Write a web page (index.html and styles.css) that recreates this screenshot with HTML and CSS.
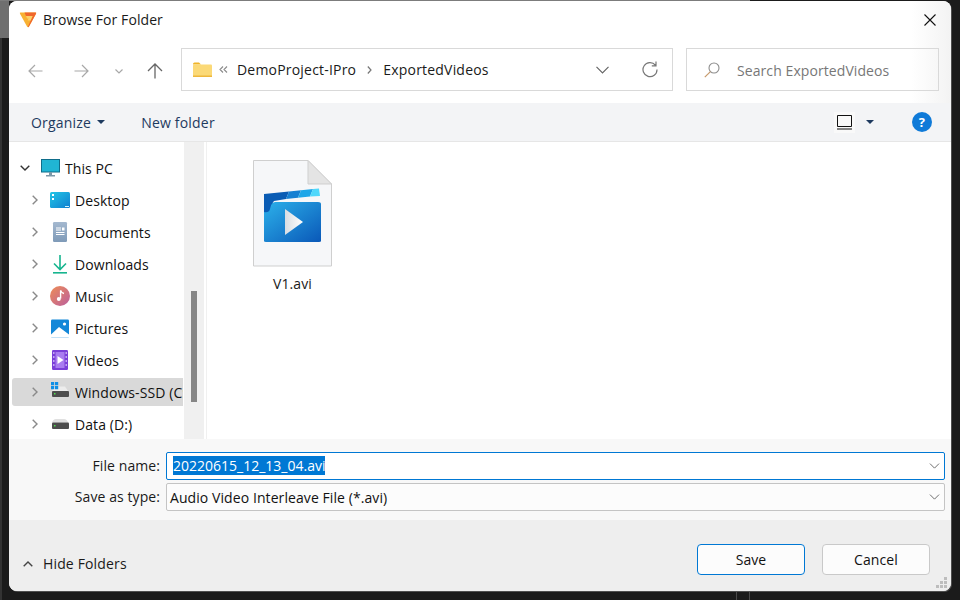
FILE: index.html
```html
<!DOCTYPE html>
<html lang="en">
<head>
    <meta charset="UTF-8">
    <title>Browse For Folder</title>
    <link rel="stylesheet" href="styles.css">
</head>
<body>
    <div class="dialog">
        <div class="titlebar">
            <svg class="logo" width="18" height="17" viewBox="0 0 18 17">
                <path d="M1.5 1.5 H16.5 Q17.6 1.5 17 2.8 L10 15.6 Q9 17 8 15.6 L1 2.8 Q.4 1.5 1.5 1.5Z" fill="#f8b133"/>
                <path d="M5.5 1.5 H16.5 Q17.6 1.5 17 2.8 L10 15.6 Q9.4 16.4 8.8 16 L13.6 5 H7Z" fill="#f0672c"/>
                <path d="M7 5 H13.6 L11.6 9.6 H8.6 L9.6 7.6 H8.2Z" fill="#fbd06a"/>
            </svg>
            <span class="title">Browse For Folder</span>
            <svg class="close" width="12" height="12" viewBox="0 0 12 12"><path d="M.5 .5 L11.5 11.5 M11.5 .5 L.5 11.5" stroke="#111" stroke-width="1.1" fill="none"/></svg>
        </div>

        <div class="nav">
            <svg class="nav-back" width="15" height="14" viewBox="0 0 15 14"><path d="M14.5 7 H1 M7 1 L1 7 L7 13" stroke="#a8a8a8" stroke-width="1.2" fill="none"/></svg>
            <svg class="nav-fwd" width="15" height="14" viewBox="0 0 15 14"><path d="M.5 7 H14 M8 1 L14 7 L8 13" stroke="#a8a8a8" stroke-width="1.2" fill="none"/></svg>
            <svg class="nav-recent" width="8" height="5" viewBox="0 0 8 5"><path d="M.5 .5 L4 4 L7.5 .5" stroke="#a8a8a8" stroke-width="1.2" fill="none"/></svg>
            <svg class="nav-up" width="16" height="16" viewBox="0 0 16 16"><path d="M8 15.5 V1 M1 8 L8 1 L15 8" stroke="#666" stroke-width="1.3" fill="none"/></svg>
            <div class="address">
                <svg class="folder" width="19" height="15" viewBox="0 0 19 15">
                    <path d="M0 2 Q0 .5 1.5 .5 H6 L8 2.5 H0Z" fill="#f0b429"/>
                    <rect x="0" y="2.5" width="19" height="12.5" rx="1" fill="#fbd977"/>
                    <rect x="0" y="13.5" width="19" height="1.5" fill="#eeb73c"/>
                </svg>
                <svg class="crumb-more" width="9" height="7" viewBox="0 0 9 7"><path d="M4 .5 L1 3.5 L4 6.5 M8 .5 L5 3.5 L8 6.5" stroke="#8a8a8a" stroke-width="1.1" fill="none"/></svg>
                <span class="crumb">DemoProject-IPro</span>
                <svg class="crumb-sep" width="5" height="8" viewBox="0 0 5 8"><path d="M.8 .5 L4 4 L.8 7.5" stroke="#777" stroke-width="1.2" fill="none"/></svg>
                <span class="crumb">ExportedVideos</span>
                <svg class="addr-drop" width="13" height="8" viewBox="0 0 13 8"><path d="M.5 .8 L6.5 6.8 L12.5 .8" stroke="#666" stroke-width="1.2" fill="none"/></svg>
                <svg class="refresh" width="17" height="17" viewBox="0 0 17 17"><path d="M14.4 4.2 A7 7 0 1 0 16 8.6 M15 .6 V4.8 H10.8" stroke="#777" stroke-width="1.2" fill="none"/></svg>
            </div>
            <div class="search">
                <svg width="16" height="16" viewBox="0 0 16 16"><circle cx="10" cy="6" r="5" stroke="#8d8d8d" stroke-width="1.1" fill="none"/><path d="M6.4 9.6 L.8 15.2" stroke="#c79a6c" stroke-width="1.2"/></svg>
                <span class="search-text">Search ExportedVideos</span>
            </div>
        </div>

        <div class="toolbar">
            <span class="tool">Organize</span>
            <span class="caret"></span>
            <span class="tool new-folder">New folder</span>
            <span class="view-btn">
                <svg width="15" height="15" viewBox="0 0 15 15"><path d="M.5 .5 H14.5 V11.5 H.5Z M0 14 H15" stroke="#111" stroke-width="1" fill="none"/></svg>
            </span>
            <span class="caret view-caret"></span>
            <span class="help">?</span>
        </div>

        <div class="main">
            <div class="tree">
                <div class="row top-row">
                    <svg class="chev" width="10" height="6" viewBox="0 0 10 6"><path d="M.7 .7 L5 5 L9.3 .7" stroke="#333" stroke-width="1.4" fill="none"/></svg>
                    <svg class="ico" width="19" height="18" viewBox="0 0 19 18">
                        <rect x=".5" y=".5" width="18" height="12.5" fill="#20b5d4" stroke="#0f6d8a"/>
                        <rect x="8" y="13" width="3" height="3" fill="#7d98a8"/>
                        <rect x="5" y="16" width="9" height="1.5" fill="#7d98a8"/>
                    </svg>
                    <span>This PC</span>
                </div>
                <div class="row">
                    <svg class="chev" width="6" height="10" viewBox="0 0 6 10"><path d="M.7 .7 L5 5 L.7 9.3" stroke="#8a8a8a" stroke-width="1.4" fill="none"/></svg>
                    <svg class="ico" width="20" height="16" viewBox="0 0 20 16">
                        <defs><linearGradient id="dk" x1="0" y1="0" x2="1" y2="1"><stop offset="0" stop-color="#22c6e6"/><stop offset="1" stop-color="#0f7fd0"/></linearGradient></defs>
                        <rect width="20" height="16" rx="1.5" fill="url(#dk)"/>
                        <rect x="2" y="2" width="2" height="2" fill="#fff"/>
                        <rect x="2" y="6" width="2" height="2" fill="#fff"/>
                        <rect x="15" y="14" width="4" height="1" fill="#d5f0fa"/>
                    </svg>
                    <span>Desktop</span>
                </div>
                <div class="row">
                    <svg class="chev" width="6" height="10" viewBox="0 0 6 10"><path d="M.7 .7 L5 5 L.7 9.3" stroke="#8a8a8a" stroke-width="1.4" fill="none"/></svg>
                    <svg class="ico" width="20" height="20" viewBox="0 0 20 20">
                        <defs><linearGradient id="doc" x1="0" y1="0" x2="0" y2="1"><stop offset="0" stop-color="#a4b8cf"/><stop offset="1" stop-color="#7f9ab8"/></linearGradient></defs>
                        <rect x="3" width="14" height="20" rx="1.2" fill="url(#doc)"/>
                        <path d="M6 6 H11 M6 8 H11 M6 10.5 H14.5 M6 12.5 H14.5" stroke="#fff" stroke-width="1"/>
                        <rect x="12" y="5.5" width="2.5" height="3" fill="#fff"/>
                    </svg>
                    <span>Documents</span>
                </div>
                <div class="row">
                    <svg class="chev" width="6" height="10" viewBox="0 0 6 10"><path d="M.7 .7 L5 5 L.7 9.3" stroke="#8a8a8a" stroke-width="1.4" fill="none"/></svg>
                    <svg class="ico" width="20" height="20" viewBox="0 0 20 20">
                        <path d="M10 1 V15 M4 9.5 L10 15.5 L16 9.5" stroke="#17b58f" stroke-width="1.6" fill="none"/>
                        <rect x="3" y="18" width="14" height="1.6" fill="#17b58f"/>
                    </svg>
                    <span>Downloads</span>
                </div>
                <div class="row">
                    <svg class="chev" width="6" height="10" viewBox="0 0 6 10"><path d="M.7 .7 L5 5 L.7 9.3" stroke="#8a8a8a" stroke-width="1.4" fill="none"/></svg>
                    <svg class="ico" width="20" height="20" viewBox="0 0 20 20">
                        <defs><linearGradient id="mu" x1="0" y1="0" x2="1" y2="1"><stop offset="0" stop-color="#ee8d55"/><stop offset="1" stop-color="#bb5f9f"/></linearGradient></defs>
                        <circle cx="10" cy="10" r="10" fill="url(#mu)"/>
                        <path d="M10.6 4.5 V12.5" stroke="#fff" stroke-width="1.4"/>
                        <path d="M10.6 4.5 Q11.5 7 14 7.5" stroke="#fff" stroke-width="1.3" fill="none"/>
                        <circle cx="8.8" cy="13" r="2" fill="#fff"/>
                    </svg>
                    <span>Music</span>
                </div>
                <div class="row">
                    <svg class="chev" width="6" height="10" viewBox="0 0 6 10"><path d="M.7 .7 L5 5 L.7 9.3" stroke="#8a8a8a" stroke-width="1.4" fill="none"/></svg>
                    <svg class="ico" width="20" height="19" viewBox="0 0 20 19">
                        <rect width="18" height="18" x="1" y=".5" rx="1.2" fill="#1387d8"/>
                        <path d="M1 15.5 L9 8 L19 15.5 V17.3 Q19 18.5 17.8 18.5 H2.2 Q1 18.5 1 17.3Z" fill="#fff"/>
                        <circle cx="14.5" cy="5" r="1.6" fill="#fff"/>
                    </svg>
                    <span>Pictures</span>
                </div>
                <div class="row">
                    <svg class="chev" width="6" height="10" viewBox="0 0 6 10"><path d="M.7 .7 L5 5 L.7 9.3" stroke="#8a8a8a" stroke-width="1.4" fill="none"/></svg>
                    <svg class="ico" width="20" height="20" viewBox="0 0 20 20">
                        <rect x="2" width="16" height="20" rx="1.2" fill="#7a3fd8"/>
                        <rect x="5.5" y="2" width="9" height="16" fill="#a97cf0"/>
                        <path d="M7.5 6 L13.5 10 L7.5 14Z" fill="#fff"/>
                        <path d="M3 3 H4.5 M3 7 H4.5 M3 11 H4.5 M3 15 H4.5 M15.5 3 H17 M15.5 7 H17 M15.5 11 H17 M15.5 15 H17" stroke="#d9c6fa" stroke-width="1.4"/>
                    </svg>
                    <span>Videos</span>
                </div>
                <div class="row selected">
                    <svg class="chev" width="6" height="10" viewBox="0 0 6 10"><path d="M.7 .7 L5 5 L.7 9.3" stroke="#8a8a8a" stroke-width="1.4" fill="none"/></svg>
                    <svg class="ico" width="20" height="20" viewBox="0 0 20 20">
                        <path d="M2 9 L5 4.5 H15 L18 9Z" fill="#ececec"/>
                        <rect x="2" y="9" width="17" height="6" rx="1" fill="#4d4d4d"/>
                        <rect x="4" y="11" width="1.5" height="1.5" fill="#4fe04f"/>
                        <path d="M1 0 H4.2 V3.2 H1Z M5 0 H8.2 V3.2 H5Z M1 4 H4.2 V7.2 H1Z M5 4 H8.2 V7.2 H5Z" fill="#0f8fe6"/>
                    </svg>
                    <span>Windows-SSD (C:)</span>
                </div>
                <div class="row">
                    <svg class="chev" width="6" height="10" viewBox="0 0 6 10"><path d="M.7 .7 L5 5 L.7 9.3" stroke="#8a8a8a" stroke-width="1.4" fill="none"/></svg>
                    <svg class="ico" width="20" height="14" viewBox="0 0 20 14">
                        <path d="M2 5.5 Q3 2 6 2 H14 Q17 2 18 5.5Z" fill="#e0e0e0"/>
                        <rect x="2" y="5.5" width="17" height="6.5" rx="1" fill="#4d4d4d"/>
                        <rect x="4" y="8" width="1.5" height="1.5" fill="#4fe04f"/>
                    </svg>
                    <span>Data (D:)</span>
                </div>
            </div>
            <div class="track"><div class="thumb"></div></div>
            <div class="pane">
                <div class="file">
                    <svg width="79" height="107" viewBox="0 0 79 107">
                        <defs>
                            <linearGradient id="board" x1="0" y1="0" x2="1" y2="1"><stop offset="0" stop-color="#2cb1ea"/><stop offset="1" stop-color="#0a58b8"/></linearGradient>
                            <linearGradient id="play" x1="0" y1="0" x2="1" y2="0"><stop offset="0" stop-color="#d8dde2"/><stop offset="1" stop-color="#ffffff"/></linearGradient>
                        </defs>
                        <path d="M.5 .5 H55 L78.5 24 V106 H.5Z" fill="#f6f7f9" stroke="#cfcfcf"/>
                        <path d="M55 .5 V24 H78.5Z" fill="#e4e4e4" stroke="#cfcfcf"/>
                        <path d="M22 42 H65 Q68 42 68 44 V81 Q68 82 66 82 H13 Q11 82 11 81 V46Z" fill="url(#board)"/>
                        <path d="M11 34 L36 31.5 L33 39 L21 41 Q18 44 17 49 Q16 53 11 52Z" fill="#0a5cb4"/>
                        <path d="M36 31.5 L48 30.3 L45 37.8 L33 39Z" fill="#1580d2"/>
                        <path d="M48 30.3 L60 29 L57 36.6 L45 37.8Z" fill="#1ea6e8"/>
                        <path d="M60 29 L66 28.4 L67 36 L57 36.6Z" fill="#4fd8fb"/>
                        <path d="M32 49 L50 62 L32 75Z" fill="url(#play)"/>
                    </svg>
                    <span class="file-name">V1.avi</span>
                </div>
            </div>
        </div>

        <div class="form">
            <label>File name:</label>
            <div class="field active">
                <span class="sel">20220615_12_13_04.avi</span>
                <svg width="11" height="6" viewBox="0 0 12 7"><path d="M.7 .7 L6 6 L11.3 .7" stroke="#666" stroke-width="1.1" fill="none"/></svg>
            </div>
            <label>Save as type:</label>
            <div class="field">
                <span class="val">Audio Video Interleave File (*.avi)</span>
                <svg width="11" height="6" viewBox="0 0 12 7"><path d="M.7 .7 L6 6 L11.3 .7" stroke="#666" stroke-width="1.1" fill="none"/></svg>
            </div>
        </div>

        <div class="footer">
            <svg class="hide-chev" width="10" height="6" viewBox="0 0 10 6"><path d="M.7 5.3 L5 1 L9.3 5.3" stroke="#444" stroke-width="1.4" fill="none"/></svg>
            <span class="hide-label">Hide Folders</span>
            <button class="btn primary">Save</button>
            <button class="btn">Cancel</button>
            <svg class="grip" width="12" height="12" viewBox="0 0 12 12">
                <path d="M8 0 H11 V3 H8Z M4 4 H7 V7 H4Z M8 4 H11 V7 H8Z M0 8 H3 V11 H0Z M4 8 H7 V11 H4Z M8 8 H11 V11 H8Z" fill="#bdbdbd"/>
            </svg>
        </div>
    </div>
</body>
</html>
```

FILE: styles.css
```css
html, body {
    margin: 0;
    height: 600px;
    overflow: hidden;
}
body {
    font-family: "Open Sans", "Noto Sans", sans-serif;
    font-size: 14px;
    letter-spacing: 0.08px;
    color: #1a1a1a;
    padding: 1px 9px 9px 9px;
    box-sizing: border-box;
    background-color: #1b1b1b;
    background-image:
        linear-gradient(#7c7c7c, #7c7c7c),
        linear-gradient(#6f6f6f, #6f6f6f),
        linear-gradient(#333, #333),
        linear-gradient(#4a4a4a, #4a4a4a),
        linear-gradient(#4a4a4a, #4a4a4a);
    background-repeat: no-repeat;
    background-size: 750px 1px, 9px 38px, 2px 600px, 1px 9px, 1px 9px;
    background-position: 0 0, 0 0, 0 0, 736px 591px, 749px 591px;
}
.dialog {
    width: 942px;
    height: 590px;
    background: #fff;
    border-radius: 8px;
    box-shadow: 1px 1px 0 #4f4f4f;
    overflow: hidden;
    display: flex;
    flex-direction: column;
}

.titlebar {
    height: 38px;
    display: flex;
    align-items: center;
    padding: 0 15px 0 10px;
    flex-shrink: 0;
    background: linear-gradient(to right, #fff calc(100% - 40px), #f3f3f3);
}
.logo {
    margin: -2px 6px 0 0;
}
.title {
    color: #1a1a1a;
    margin-top: -2px;
}
.close {
    margin-left: auto;
}

.nav {
    height: 64px;
    display: flex;
    align-items: center;
    padding: 0 10px 0 19px;
    flex-shrink: 0;
    background: linear-gradient(to right, #fff calc(100% - 40px), #f3f3f3);
}
.nav-fwd {
    margin-left: 31px;
}
.nav-recent {
    margin-left: 26px;
}
.nav-up {
    margin-left: 24px;
}
.address {
    width: 492px;
    height: 43px;
    box-sizing: border-box;
    border: 1px solid #d9d9d9;
    margin-left: 18px;
    margin-top: -3px;
    display: flex;
    align-items: center;
    padding-left: 11px;
    background: #fff;
}
.crumb-more {
    margin: 0 9px 0 7px;
}
.crumb {
    color: #1a1a1a;
    letter-spacing: 0.2px;
}
.crumb-sep {
    margin: 0 11px;
}
.addr-drop {
    margin-left: auto;
}
.refresh {
    margin: 0 14px 0 32px;
}
.search {
    width: 253px;
    height: 43px;
    box-sizing: border-box;
    border: 1px solid #d9d9d9;
    margin-left: 13px;
    margin-top: -3px;
    display: flex;
    align-items: center;
    padding-left: 17px;
    color: #777;
    gap: 17px;
}
.search-text {
    margin-top: 2px;
}

.toolbar {
    height: 38px;
    background: #f3f4f6;
    border-bottom: 1px solid #e6e6e6;
    display: flex;
    align-items: center;
    padding: 0 19px 0 22px;
    flex-shrink: 0;
}
.tool {
    color: #1e3a5f;
    letter-spacing: 0.2px;
}
.caret {
    width: 0;
    height: 0;
    border-left: 4px solid transparent;
    border-right: 4px solid transparent;
    border-top: 4px solid #1e3a5f;
    margin-left: 6px;
}
.new-folder {
    margin-left: 36px;
}
.view-btn {
    margin-left: auto;
    display: flex;
    padding: 3px;
    background: #f9f9f9;
}
.view-caret {
    margin-left: 11px;
}
.help {
    width: 20px;
    height: 20px;
    border-radius: 50%;
    background: #0f7ad8;
    color: #fff;
    font-weight: 700;
    font-size: 13px;
    line-height: 20px;
    text-align: center;
    margin-left: 38px;
}

.main {
    height: 297px;
    display: flex;
    flex-shrink: 0;
}
.tree {
    width: 175px;
    overflow: hidden;
    padding-top: 12px;
    box-sizing: border-box;
    display: flex;
    flex-direction: column;
    gap: 4px;
    white-space: nowrap;
}
.row {
    height: 28px;
    flex-shrink: 0;
    margin: 0 1px 0 3px;
    display: flex;
    align-items: center;
    padding-left: 20px;
    color: #111;
    overflow: hidden;
}
.row svg {
    flex-shrink: 0;
}
.row .chev {
    margin-right: 12px;
}
.row .ico {
    margin-right: 5px;
}
.row.top-row {
    padding-left: 8px;
}
.row.top-row .chev {
    margin-right: 11px;
}
.row.selected {
    background: #d9d9d9;
    border-radius: 3px 0 0 3px;
}
.track {
    width: 20px;
    background: #f0f0f0;
    flex-shrink: 0;
}
.thumb {
    width: 6px;
    height: 111px;
    margin: 149px 0 0 7px;
    background: #868686;
}
.pane {
    flex: 1;
    margin-left: 2px;
    border-left: 1px solid #f0f0f0;
    padding: 18px 0 0 46px;
}
.file {
    width: 79px;
    display: flex;
    flex-direction: column;
    align-items: center;
}
.file-name {
    margin-top: 7px;
    color: #1a1a1a;
}

.form {
    height: 81px;
    box-sizing: border-box;
    background: #f8f8f8;
    display: grid;
    grid-template-columns: 151px 1fr;
    grid-auto-rows: 28px;
    column-gap: 6px;
    row-gap: 3px;
    padding: 13px 6px 0 0;
    flex-shrink: 0;
}
.form label {
    text-align: right;
    line-height: 28px;
    color: #1a1a1a;
}
.field {
    box-sizing: border-box;
    height: 28px;
    background: #fcfcfc;
    border: 1px solid #c4c4c4;
    border-radius: 2px;
    display: flex;
    align-items: center;
    padding: 0 4px 0 3px;
}
.field svg {
    margin-left: auto;
}
.field.active {
    background: #fff;
    border-color: #0078d4;
    padding-left: 6px;
}
.sel {
    background: #0078d4;
    color: #fff;
    line-height: 19px;
    letter-spacing: 0;
    margin-top: -1px;
}
.val {
    color: #111;
}

.footer {
    flex: 1;
    background: #eeeeee;
    display: flex;
    align-items: center;
    padding: 8px 21px 0 14px;
    position: relative;
}
.hide-chev {
    margin-top: 9px;
}
.hide-label {
    margin-top: 7px;
    margin-left: 10px;
    color: #1a1a1a;
    letter-spacing: 0.15px;
}
.btn {
    font: inherit;
    letter-spacing: inherit;
    color: #111;
    width: 108px;
    height: 31px;
    margin-left: 17px;
    background: #fcfcfc;
    border: 1px solid #c9c9c9;
    border-radius: 4px;
    padding: 0;
}
.btn.primary {
    margin-left: auto;
    border-color: #0078d4;
}
.grip {
    position: absolute;
    right: 3px;
    bottom: 2px;
}
```
